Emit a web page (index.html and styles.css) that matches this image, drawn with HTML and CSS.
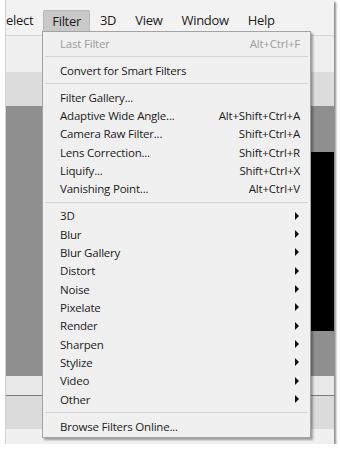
FILE: index.html
```html
<!DOCTYPE html>
<html lang="en">
<head>
    <meta charset="UTF-8">
    <meta name="viewport" content="width=device-width, initial-scale=1.0">
    <title>Filter menu</title>
    <link rel="stylesheet" href="styles.css">
</head>
<body>
    <div class="window">
        <div class="menubar">
            <span class="menubar-item first">elect</span>
            <span class="menubar-item active">Filter</span>
            <span class="menubar-item">3D</span>
            <span class="menubar-item">View</span>
            <span class="menubar-item">Window</span>
            <span class="menubar-item">Help</span>
        </div>

        <div class="options-bar"></div>
        <div class="tabs-bar"></div>
        <div class="canvas">
            <div class="document"></div>
        </div>
        <div class="panel-top"></div>
        <div class="panel-bottom"></div>
        <div class="status-bar"></div>

        <div class="dropdown">
            <div class="item disabled"><span>Last Filter</span><span>Alt+Ctrl+F</span></div>
            <div class="sep"></div>
            <div class="item"><span>Convert for Smart Filters</span></div>
            <div class="sep"></div>
            <div class="item"><span>Filter Gallery...</span></div>
            <div class="item"><span>Adaptive Wide Angle...</span><span>Alt+Shift+Ctrl+A</span></div>
            <div class="item"><span>Camera Raw Filter...</span><span>Shift+Ctrl+A</span></div>
            <div class="item"><span>Lens Correction...</span><span>Shift+Ctrl+R</span></div>
            <div class="item"><span>Liquify...</span><span>Shift+Ctrl+X</span></div>
            <div class="item"><span>Vanishing Point...</span><span>Alt+Ctrl+V</span></div>
            <div class="sep"></div>
            <div class="item sub"><span>3D</span><i class="arrow"></i></div>
            <div class="item sub"><span>Blur</span><i class="arrow"></i></div>
            <div class="item sub"><span>Blur Gallery</span><i class="arrow"></i></div>
            <div class="item sub"><span>Distort</span><i class="arrow"></i></div>
            <div class="item sub"><span>Noise</span><i class="arrow"></i></div>
            <div class="item sub"><span>Pixelate</span><i class="arrow"></i></div>
            <div class="item sub"><span>Render</span><i class="arrow"></i></div>
            <div class="item sub"><span>Sharpen</span><i class="arrow"></i></div>
            <div class="item sub"><span>Stylize</span><i class="arrow"></i></div>
            <div class="item sub"><span>Video</span><i class="arrow"></i></div>
            <div class="item sub"><span>Other</span><i class="arrow"></i></div>
            <div class="sep"></div>
            <div class="item"><span>Browse Filters Online...</span></div>
        </div>
    </div>
</body>
</html>
```

FILE: styles.css
```css
body {
    margin: 0;
    padding: 0;
    background: #fff;
    font-family: 'Open Sans', 'Noto Sans', sans-serif;
    color: #1b1b1b;
}

.window {
    position: relative;
    margin-left: 5px;
    width: 329px;
    height: 444px;
    overflow: hidden;
    background: #f0f0f0;
    border-left: 1px solid #d2d2d2;
    box-sizing: border-box;
    box-shadow: 2px 2px 2px rgba(0, 0, 0, 0.45);
    display: flex;
    flex-direction: column;
}

/* barra de menus */
.menubar {
    height: 36px;
    flex: none;
    display: flex;
    align-items: flex-start;
    padding-top: 10px;
    box-sizing: border-box;
    background: #f2f2f2;
    border-bottom: 1px solid #d6d6d6;
    font-size: 13px;
    letter-spacing: -0.3px;
}

.menubar-item {
    height: 21px;
    line-height: 21px;
    padding: 0 9px;
    margin-right: 1px;
    box-sizing: border-box;
}

.menubar-item.first {
    margin-left: -9px;
}

.menubar-item.active {
    background: #c9c9c9;
    border: 1px solid #b9b9b9;
    border-bottom: none;
    border-radius: 2px 2px 0 0;
    padding: 0 8px;
    line-height: 20px;
}

.options-bar {
    height: 36px;
    flex: none;
    background: #efefef;
}

.tabs-bar {
    height: 34px;
    flex: none;
    background: #dcdcdc;
}

.canvas {
    height: 270px;
    flex: none;
    background: #8f8f8f;
    display: flex;
    align-items: flex-start;
}

.document {
    margin: 46px 0 0 auto;
    width: 120px;
    height: 179px;
    background: #000;
}

.panel-top {
    height: 19px;
    flex: none;
    background: #e8e8e8;
    border-bottom: 1px solid #7c7c7c;
}

.panel-bottom {
    height: 33px;
    flex: none;
    background: #dbdbdb;
}

.status-bar {
    flex: 1;
    background: #f0f0f0;
}

/* menu desplegable */
.dropdown {
    position: absolute;
    left: 36px;
    top: 31px;
    width: 269px;
    padding: 2px 0;
    box-sizing: border-box;
    background: #f0f0f0;
    border: 1px solid #a3a3a3;
    box-shadow: 2px 2px 2px rgba(0, 0, 0, 0.35);
    font-size: 11.5px;
    letter-spacing: -0.2px;
}

.item {
    height: 18.33px;
    display: flex;
    align-items: center;
    justify-content: space-between;
    padding: 0 10px 0 17px;
}

.item.disabled {
    color: #9c9c9c;
}

.sep {
    height: 1px;
    margin: 4px 2px 3.67px;
    background: #d3d3d3;
}

.arrow {
    width: 0;
    height: 0;
    margin-right: 1px;
    border-left: 4px solid #111;
    border-top: 4px solid transparent;
    border-bottom: 4px solid transparent;
}
```
